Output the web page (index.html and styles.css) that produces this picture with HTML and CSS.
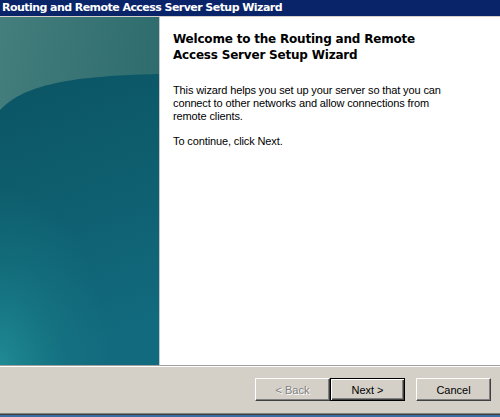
FILE: index.html
```html
<!DOCTYPE html>
<html>
<head>
<meta charset="utf-8">
<link rel="stylesheet" href="styles.css">
</head>
<body>
<div class="window">
  <div class="titlebar">Routing and Remote Access Server Setup Wizard</div>
  <div class="main">
    <div class="banner">
      <svg class="banner-art" width="159" height="348" viewBox="0 0 159 348" xmlns="http://www.w3.org/2000/svg">
        <defs>
          <linearGradient id="bg" x1="0" y1="0" x2="1" y2="0.4">
            <stop offset="0" stop-color="#447e7d"/>
            <stop offset="1" stop-color="#2c6a6c"/>
          </linearGradient>
          <linearGradient id="disc" x1="0" y1="0" x2="0.2" y2="1">
            <stop offset="0" stop-color="#0b5464"/>
            <stop offset="0.5" stop-color="#0e5f6f"/>
            <stop offset="1" stop-color="#126a7e"/>
          </linearGradient>
          <radialGradient id="glow" cx="0" cy="1" r="1" gradientUnits="objectBoundingBox">
            <stop offset="0" stop-color="#23939a" stop-opacity="0.8"/>
            <stop offset="0.6" stop-color="#1a8088" stop-opacity="0.3"/>
            <stop offset="1" stop-color="#1a8088" stop-opacity="0"/>
          </radialGradient>
        </defs>
        <rect width="159" height="348" fill="url(#bg)"/>
        <path d="M0,93 C22,70 62,59 159,57 L159,348 L0,348 Z" fill="url(#disc)"/>
        <rect x="0" y="170" width="110" height="178" fill="url(#glow)"/>
      </svg>
    </div>
    <div class="content">
      <h1 class="heading">Welcome to the Routing and Remote Access Server Setup Wizard</h1>
      <p class="text">This wizard helps you set up your server so that you can connect to other networks and allow connections from remote clients.</p>
      <p class="text">To continue, click Next.</p>
    </div>
  </div>
  <div class="buttonbar">
    <div class="btn disabled"><span>&lt; Back</span></div>
    <div class="btn default"><span>Next &gt;</span></div>
    <div class="btn cancel"><span>Cancel</span></div>
  </div>
  <div class="bottomline"></div>
</div>
</body>
</html>
```
FILE: styles.css
```css
html, body {
  margin: 0;
  padding: 0;
}
body {
  width: 500px;
  height: 417px;
  overflow: hidden;
  background: #d4d0c8;
}
.window {
  display: flex;
  flex-direction: column;
  width: 500px;
  height: 417px;
}
.titlebar {
  height: 16px;
  background: #0a246a;
  color: #fff;
  font-family: "DejaVu Sans", sans-serif;
  font-weight: bold;
  font-size: 11px;
  line-height: 15px;
  padding-left: 2px;
  border-bottom: 1px solid #d4d0c8;
  white-space: nowrap;
  letter-spacing: -0.55px;
}
.main {
  display: flex;
  height: 348px;
  background: #fff;
  border-bottom: 1px solid #a0a0a0;
}
.banner {
  width: 159px;
  flex: none;
  border-right: 1px solid #c8c8c8;
  background: #2f6e70;
}
.banner-art {
  display: block;
}
.content {
  flex: 1;
  padding: 14px 0 0 13px;
  font-family: "Liberation Sans", Arial, sans-serif;
  color: #000;
}
.heading {
  margin: 0 0 21px 0;
  font-family: "DejaVu Sans", sans-serif;
  font-weight: bold;
  font-size: 12px;
  line-height: 16px;
  width: 260px;
  letter-spacing: -0.2px;
}
.text {
  margin: 0 0 12px 0;
  font-size: 11px;
  line-height: 13px;
  width: 290px;
  letter-spacing: -0.12px;
}
.buttonbar {
  flex: 1;
  display: flex;
  align-items: flex-start;
  padding: 11px 8px 0 255px;
  border-top: 1px solid #fff;
  border-bottom: 1px solid #808080;
}
.btn {
  box-sizing: border-box;
  width: 75px;
  height: 23px;
  display: flex;
  align-items: center;
  justify-content: center;
  font-family: "Liberation Sans", Arial, sans-serif;
  font-size: 11px;
  color: #000;
  background: #d4d0c8;
  border: 1px solid;
  border-color: #fff #404040 #404040 #fff;
  box-shadow: inset -1px -1px 0 #808080;
}
.btn.disabled {
  color: #808080;
  text-shadow: 1px 1px 0 #fff;
}
.btn.default {
  border: 1px solid #000;
  box-shadow: inset 1px 1px 0 #fff, inset -1px -1px 0 #404040, inset -2px -2px 0 #808080;
}
.btn.cancel {
  margin-left: 11px;
}
.bottomline {
  height: 2px;
  background: #3a6ea5;
  border-top: 1px solid #404040;
}
```
